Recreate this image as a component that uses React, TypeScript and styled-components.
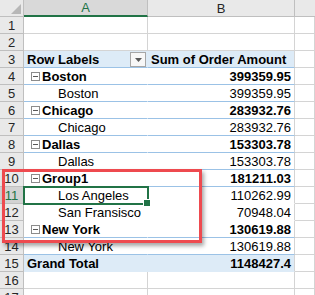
import styled, { createGlobalStyle, css } from "styled-components";

const GlobalStyle = createGlobalStyle`
  html, body {
    margin: 0;
    padding: 0;
    background: #fff;
  }
  body {
    font-family: "Liberation Sans", Arial, sans-serif;
    width: 315px;
    height: 295px;
    overflow: hidden;
  }
`;

type Kind = "blank" | "head" | "group" | "item" | "total";

interface Row {
  n: number;
  a?: string;
  b?: string;
  kind: Kind;
  line?: boolean; // blue rule under the row
}

const rows: Row[] = [
  { n: 1, kind: "blank" },
  { n: 2, kind: "blank" },
  { n: 3, a: "Row Labels", b: "Sum of Order Amount", kind: "head", line: true },
  { n: 4, a: "Boston", b: "399359.95", kind: "group", line: true },
  { n: 5, a: "Boston", b: "399359.95", kind: "item", line: true },
  { n: 6, a: "Chicago", b: "283932.76", kind: "group", line: true },
  { n: 7, a: "Chicago", b: "283932.76", kind: "item", line: true },
  { n: 8, a: "Dallas", b: "153303.78", kind: "group", line: true },
  { n: 9, a: "Dallas", b: "153303.78", kind: "item", line: true },
  { n: 10, a: "Group1", b: "181211.03", kind: "group", line: true },
  { n: 11, a: "Los Angeles", b: "110262.99", kind: "item" },
  { n: 12, a: "San Fransisco", b: "70948.04", kind: "item" },
  { n: 13, a: "New York", b: "130619.88", kind: "group", line: true },
  { n: 14, a: "New York", b: "130619.88", kind: "item", line: true },
  { n: 15, a: "Grand Total", b: "1148427.4", kind: "total" },
  { n: 16, kind: "blank" },
  { n: 17, kind: "blank" },
];

const GRID = "#d4d4d4";
const HEAD_LINE = "#bfbfbf";
const BLUE = "#9bc2e6";
const FILL = "#ddebf7";
const GREEN = "#217346";

export default function App() {
  return (
    <>
      <GlobalStyle />
      <Sheet>
        <Corner>
          <CornerMark />
        </Corner>
        <ColHead $selected>A</ColHead>
        <ColHead>B</ColHead>
        <ColHead $last />

        {rows.map((r) => (
          <RowCells key={r.n} row={r} />
        ))}

        <Selection>
          <Handle />
        </Selection>
        <Callout />
      </Sheet>
    </>
  );
}

const RowCells = ({ row }: { row: Row }) => {
  const pivot = row.kind !== "blank";
  const bold = row.kind === "head" || row.kind === "group" || row.kind === "total";
  return (
    <>
      <RowHead $selected={row.n === 11}>{row.n}</RowHead>
      <Cell $kind={row.kind} $line={row.line} $bold={bold}>
        {row.kind === "group" && <Minus />}
        {row.kind === "item" ? <Indent>{row.a}</Indent> : row.a}
        {row.kind === "head" && (
          <Dropdown>
            <svg width="7" height="4" viewBox="0 0 7 4">
              <path d="M0 0 H7 L3.5 4 Z" fill="#595959" />
            </svg>
          </Dropdown>
        )}
      </Cell>
      <Cell
        $kind={row.kind}
        $line={row.line}
        $bold={bold}
        $right={pivot && row.kind !== "head"}
        $edge
      >
        {row.b}
      </Cell>
      <Cell $kind="blank" $edge />
    </>
  );
};

const Sheet = styled.div`
  position: relative;
  display: grid;
  grid-template-columns: 24px 124px 147px 1fr;
  grid-template-rows: 17px;
  grid-auto-rows: 17px;
  width: 315px;
  font-size: 13px;
  color: #000;
`;

const Corner = styled.div`
  position: relative;
  background: #e9e9e9;
  border-right: 1px solid ${HEAD_LINE};
  border-bottom: 1px solid ${HEAD_LINE};
`;

const CornerMark = styled.div`
  position: absolute;
  right: 2px;
  bottom: 2px;
  width: 0;
  height: 0;
  border-left: 10px solid transparent;
  border-bottom: 10px solid #b7b7b7;
`;

const ColHead = styled.div<{ $selected?: boolean; $last?: boolean }>`
  display: flex;
  align-items: center;
  justify-content: center;
  background: ${(p) => (p.$selected ? "#d9d9d9" : "#e9e9e9")};
  color: ${(p) => (p.$selected ? GREEN : "#262626")};
  font-size: 13px;
  border-right: ${(p) => (p.$last ? "none" : `1px solid ${HEAD_LINE}`)};
  border-bottom: ${(p) => (p.$selected ? `2px solid ${GREEN}` : `1px solid ${HEAD_LINE}`)};
  box-sizing: border-box;
`;

const RowHead = styled.div<{ $selected?: boolean }>`
  display: flex;
  align-items: center;
  justify-content: center;
  background: ${(p) => (p.$selected ? "#d2d2d2" : "#e9e9e9")};
  color: ${(p) => (p.$selected ? GREEN : "#262626")};
  border-right: 1px solid ${HEAD_LINE};
  border-bottom: 1px solid ${HEAD_LINE};
  box-sizing: border-box;
`;

const Cell = styled.div<{
  $kind: Kind;
  $line?: boolean;
  $bold?: boolean;
  $right?: boolean;
  $edge?: boolean;
}>`
  position: relative;
  display: flex;
  align-items: center;
  justify-content: ${(p) => (p.$right ? "flex-end" : "flex-start")};
  padding: 0 3px;
  box-sizing: border-box;
  white-space: nowrap;
  overflow: visible;
  font-weight: ${(p) => (p.$bold ? 700 : 400)};
  background: ${(p) => (p.$kind === "head" || p.$kind === "total" ? FILL : "#fff")};
  ${(p) =>
    p.$kind === "blank"
      ? css`
          border-bottom: 1px solid ${GRID};
          border-right: 1px solid ${GRID};
        `
      : css`
          border-bottom: 1px solid ${p.$line ? BLUE : "transparent"};
          border-right: 1px solid ${p.$edge ? GRID : "transparent"};
        `}
  ${(p) =>
    p.$kind === "total" &&
    css`
      border-top: 1px solid ${BLUE};
      margin-top: -1px;
      height: 18px;
    `}
`;

const Indent = styled.span`
  padding-left: 31px;
`;

const Minus = styled.span`
  position: relative;
  width: 9px;
  height: 9px;
  margin: 0 2px 0 4px;
  border: 1px solid #8c8c8c;
  box-sizing: border-box;
  background: #fff;
  flex: none;
  &::after {
    content: "";
    position: absolute;
    left: 1px;
    right: 1px;
    top: 3px;
    height: 1px;
    background: #595959;
  }
`;

const Dropdown = styled.span`
  position: absolute;
  right: 1px;
  top: 1px;
  width: 16px;
  height: 15px;
  box-sizing: border-box;
  border: 1px solid #a6a6a6;
  background: #f7f7f7;
  display: flex;
  align-items: center;
  justify-content: center;
`;

const Selection = styled.div`
  position: absolute;
  left: 23px;
  top: 186px;
  width: 126px;
  height: 19px;
  border: 2px solid ${GREEN};
  box-sizing: border-box;
  pointer-events: none;
`;

const Handle = styled.div`
  position: absolute;
  right: -4px;
  bottom: -4px;
  width: 6px;
  height: 6px;
  background: ${GREEN};
  border: 1px solid #fff;
`;

const Callout = styled.div`
  position: absolute;
  left: 2px;
  top: 169px;
  width: 200px;
  height: 74px;
  border: 3px solid #ee4a4f;
  box-sizing: border-box;
  box-shadow: 2px 3px 4px rgba(0, 0, 0, 0.35);
  pointer-events: none;
`;
